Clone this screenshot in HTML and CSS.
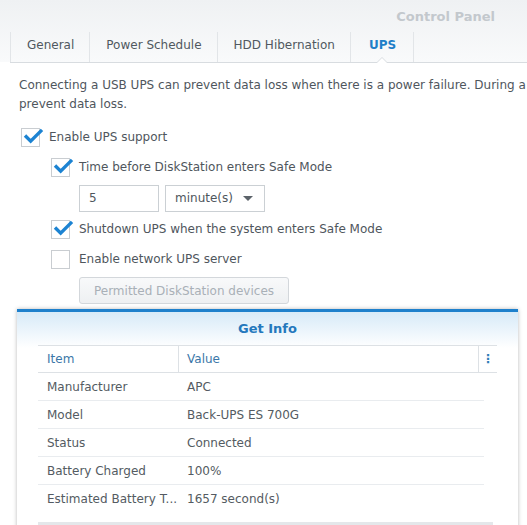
FILE: index.html
```html
<!DOCTYPE html>
<html lang="en">
  <head>
    <meta charset="UTF-8" />
    <title>Control Panel - UPS</title>
    <link rel="stylesheet" href="styles.css">
  </head>
  <body>
    <div class="header">
      <div class="title-row">Control Panel</div>
      <div class="tabs">
        <div class="tab">General</div>
        <div class="tab">Power Schedule</div>
        <div class="tab">HDD Hibernation</div>
        <div class="tab active">UPS</div>
        <div class="tab-end"></div>
      </div>
    </div>

    <div class="content">
      <p class="desc">
        Connecting a USB UPS can prevent data loss when there is a power failure. During a<br />
        prevent data loss.
      </p>

      <label class="check-row">
        <span class="checkbox checked">
          <svg viewBox="0 0 22 18" class="tick"><path d="M2 9 L8 15 L20 3" /></svg>
        </span>
        Enable UPS support
      </label>

      <div class="sub">
        <label class="check-row">
          <span class="checkbox checked">
            <svg viewBox="0 0 22 18" class="tick"><path d="M2 9 L8 15 L20 3" /></svg>
          </span>
          Time before DiskStation enters Safe Mode
        </label>

        <div class="field-row">
          <div class="text-field">5</div>
          <div class="select-field">
            <span>minute(s)</span>
            <span class="arrow"></span>
          </div>
        </div>

        <label class="check-row">
          <span class="checkbox checked">
            <svg viewBox="0 0 22 18" class="tick"><path d="M2 9 L8 15 L20 3" /></svg>
          </span>
          Shutdown UPS when the system enters Safe Mode
        </label>

        <label class="check-row">
          <span class="checkbox"></span>
          Enable network UPS server
        </label>

        <button class="btn" disabled>Permitted DiskStation devices</button>
      </div>
    </div>

    <div class="dialog">
      <div class="dialog-title">Get Info</div>
      <div class="grid">
        <div class="grid-head">
          <div class="col-item">Item</div>
          <div class="col-value">Value</div>
          <div class="col-menu">&#8942;</div>
        </div>
        <div class="grid-row">
          <div class="col-item">Manufacturer</div>
          <div class="col-value">APC</div>
        </div>
        <div class="grid-row">
          <div class="col-item">Model</div>
          <div class="col-value">Back-UPS ES 700G</div>
        </div>
        <div class="grid-row">
          <div class="col-item">Status</div>
          <div class="col-value">Connected</div>
        </div>
        <div class="grid-row">
          <div class="col-item">Battery Charged</div>
          <div class="col-value">100%</div>
        </div>
        <div class="grid-row last">
          <div class="col-item">Estimated Battery T...</div>
          <div class="col-value">1657 second(s)</div>
        </div>
        <div class="grid-foot"></div>
      </div>
    </div>
  </body>
</html>
```

FILE: styles.css
```css
:root {
  --text: #4f565d;
  --blue: #1f7fc8;
  --line: #dde1e5;
}

html,
body {
  margin: 0;
  height: 100%;
  overflow: hidden;
}

body {
  font-family: "DejaVu Sans", Verdana, sans-serif;
  font-size: 12px;
  color: var(--text);
  background: #fff;
}

.header {
  height: 62px;
  background: linear-gradient(#eff1f3, #f9fafb);
}

.title-row {
  height: 32px;
  line-height: 33px;
  text-align: right;
  padding-right: 32px;
  font-weight: bold;
  font-size: 13px;
  color: #c3c8cd;
}

.tabs {
  display: flex;
  height: 30px;
  margin-left: 10px;
  border-bottom: 1px solid #d8dce0;
}

.tab {
  position: relative;
  border-left: 1px solid #e2e5e8;
  padding: 0 15px 0 16px;
  line-height: 27px;
  color: #505860;
}

.tab-end {
  border-left: 1px solid #e2e5e8;
}

.tab.active {
  color: var(--blue);
  font-weight: bold;
  padding: 0 17px 0 18px;
}

.tab.active::after {
  content: "";
  position: absolute;
  left: 50%;
  bottom: -1px;
  margin-left: -6px;
  border-left: 6px solid transparent;
  border-right: 6px solid transparent;
  border-bottom: 6px solid #d8dce0;
}

.tab.active::before {
  content: "";
  position: absolute;
  left: 50%;
  bottom: -1px;
  margin-left: -5px;
  border-left: 5px solid transparent;
  border-right: 5px solid transparent;
  border-bottom: 5px solid #fff;
  z-index: 1;
}

.content {
  padding: 14px 0 0 19px;
}

.desc {
  margin: 0;
  line-height: 19px;
  white-space: nowrap;
  overflow: hidden;
}

.check-row {
  display: flex;
  align-items: center;
  height: 30px;
  margin-top: 8px;
  gap: 9px;
}

.sub {
  padding-left: 30px;
}

.sub .check-row {
  margin-top: 0;
}

.checkbox {
  position: relative;
  width: 17px;
  height: 17px;
  border: 1px solid #c9cdd1;
  background: #fff;
  flex: none;
  margin-left: 2px;
}

.tick {
  position: absolute;
  left: 1px;
  top: -2px;
  width: 21px;
  height: 17px;
  fill: none;
  stroke: #1c83d2;
  stroke-width: 3.6;
}

.field-row {
  display: flex;
  gap: 6px;
  margin: 3px 0 2px 30px;
}

.text-field,
.select-field {
  box-sizing: border-box;
  height: 27px;
  border: 1px solid #cbd0d4;
  line-height: 25px;
  padding: 0 9px;
  background: #fff;
}

.text-field {
  width: 80px;
}

.select-field {
  width: 100px;
  display: flex;
  justify-content: space-between;
  align-items: center;
}

.arrow {
  border-left: 5px solid transparent;
  border-right: 5px solid transparent;
  border-top: 5px solid #5c636a;
  margin-right: 2px;
}

.btn {
  display: block;
  margin: 3px 0 0 30px;
  height: 27px;
  width: 210px;
  font-family: inherit;
  font-size: 12px;
  color: #a9b0b7;
  background: linear-gradient(#f8f9fa, #eef0f2);
  border: 1px solid #d3d7db;
  border-radius: 3px;
}

.dialog {
  margin: 5px 9px 0 17px;
  border-top: 3px solid #1e80cc;
  background: linear-gradient(#d7eaf8, #fff 36px);
  box-shadow: 0 0 4px rgba(0, 0, 0, 0.28);
  height: 260px;
  padding: 0 21px;
}

.dialog-title {
  height: 33px;
  line-height: 33px;
  text-align: center;
  font-weight: bold;
  font-size: 13px;
  color: #2478bd;
}

.grid-head,
.grid-row {
  box-sizing: border-box;
  display: flex;
  height: 28px;
  line-height: 27px;
}

.grid-head {
  border-top: 1px solid var(--line);
  border-bottom: 1px solid var(--line);
  color: #3b77a8;
  background: #fff;
}

.grid-row {
  padding-top: 1px;
  border-bottom: 1px solid #e9ecef;
  margin-right: 13px;
  color: #545b62;
}

.grid-row.last {
  border-bottom: none;
}

.col-item {
  width: 131px;
  padding-left: 9px;
  white-space: nowrap;
}

.grid-head .col-value {
  flex: 1;
  border-left: 1px solid var(--line);
  padding-left: 8px;
}

.grid-row .col-value {
  padding-left: 9px;
}

.col-menu {
  width: 18px;
  border-left: 1px solid var(--line);
  text-align: center;
  font-weight: bold;
  color: #2f7db8;
}

.grid-foot {
  margin-top: 9px;
  height: 6px;
  background: #e4e7ea;
  margin-right: 4px;
}
```
